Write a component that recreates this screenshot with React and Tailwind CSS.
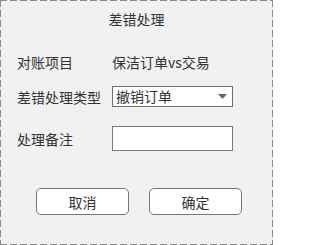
export default function App() {
  const font = { fontFamily: '"Noto Sans CJK SC", "Noto Sans", sans-serif' };
  return (
    <div
      className="w-[273px] h-[245px] p-[1px] bg-[#f1f1f1] bg-[image:repeating-linear-gradient(90deg,#8a8a8a_0_7px,transparent_7px_10px),repeating-linear-gradient(90deg,#8a8a8a_0_7px,transparent_7px_10px),repeating-linear-gradient(180deg,#8a8a8a_0_7px,transparent_7px_10px),repeating-linear-gradient(180deg,#8a8a8a_0_7px,transparent_7px_10px)] bg-[length:100%_1px,100%_1px,1px_100%,1px_100%] bg-[position:0_0,0_100%,0_0,100%_0] bg-no-repeat text-[#333333] text-[14px] flex flex-col"
      style={font}
    >
      <div className="mt-[8px] h-[20px] leading-[20px] text-center">差错处理</div>

      <div className="mt-[22px] h-[21px] flex items-center pl-[16px]">
        <div className="w-[95px] leading-[20px]">对账项目</div>
        <div className="leading-[20px]">保洁订单vs交易</div>
      </div>

      <div className="mt-[14px] h-[21px] flex items-center pl-[16px]">
        <div className="w-[95px] leading-[20px]">差错处理类型</div>
        <div className="w-[121px] h-[21px] bg-white border border-[#6f6f6f] flex items-center justify-between pl-[3px] pr-[5px]">
          <span className="leading-[19px]">撤销订单</span>
          <svg width="9" height="5" viewBox="0 0 9 5">
            <polygon points="0,0 9,0 4.5,5" fill="#666666" />
          </svg>
        </div>
      </div>

      <div className="mt-[19px] h-[25px] flex items-center pl-[16px]">
        <div className="w-[95px] leading-[20px]">处理备注</div>
        <div className="w-[121px] h-[25px] bg-white border border-[#7a7a7a]"></div>
      </div>

      <div className="mt-[37px] flex gap-[20px] pl-[35px]">
        <div className="w-[93px] h-[27px] bg-white border border-[#777777] rounded-[5px] flex items-center justify-center leading-[20px]">
          取消
        </div>
        <div className="w-[93px] h-[27px] bg-white border border-[#777777] rounded-[5px] flex items-center justify-center leading-[20px]">
          确定
        </div>
      </div>
    </div>
  );
}
